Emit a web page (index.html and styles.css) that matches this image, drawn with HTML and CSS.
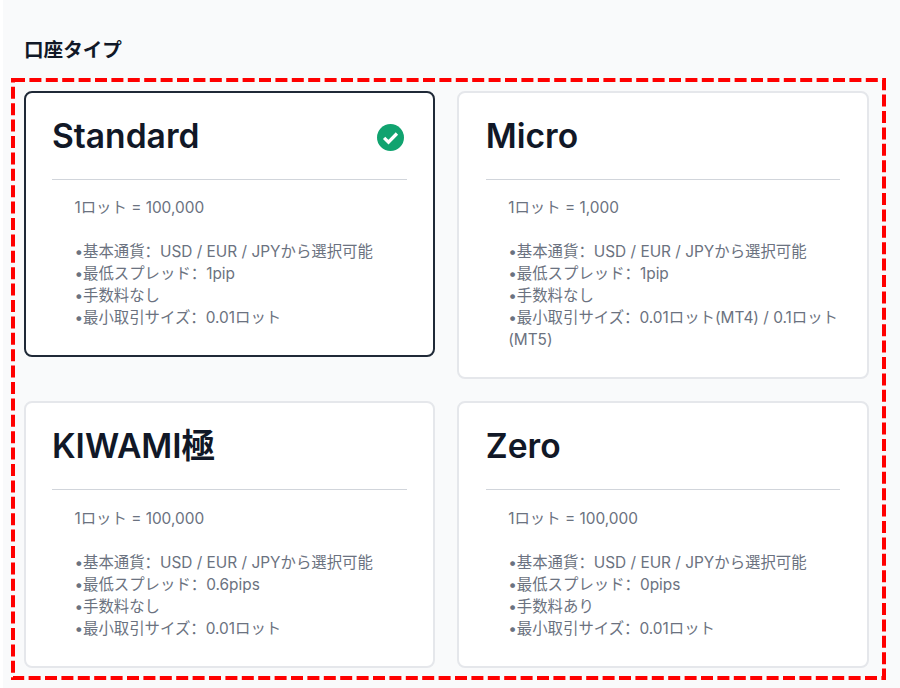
FILE: index.html
```html
<!DOCTYPE html>
<html lang="zh-CN">
<head>
<meta charset="utf-8">
<title>口座タイプ</title>
<link rel="stylesheet" href="styles.css">
</head>
<body>
<main class="page">
  <h2 class="heading">口座タイプ</h2>
  <div class="outline">
    <svg class="dashes" viewBox="0 0 875 602" aria-hidden="true"><rect x="2" y="2" width="871" height="598"/></svg>
    <div class="grid">
      <section class="card card-selected">
        <div class="head">
          <h3 class="title">Standard</h3>
          <svg class="check" viewBox="0 0 512 512" aria-hidden="true"><circle cx="256" cy="256" r="256" fill="#10a36f"/><path d="M135 262l83 83 160-165" fill="none" stroke="#fff" stroke-width="62"/></svg>
        </div>
        <div class="body">
          <p class="lot">1ロット = 100,000</p>
          <p class="specs">•基本通貨：USD / EUR / JPYから選択可能<br>•最低スプレッド：1pip<br>•手数料なし<br>•最小取引サイズ：0.01ロット</p>
        </div>
      </section>
      <section class="card">
        <div class="head"><h3 class="title">Micro</h3></div>
        <div class="body">
          <p class="lot">1ロット = 1,000</p>
          <p class="specs">•基本通貨：USD / EUR / JPYから選択可能<br>•最低スプレッド：1pip<br>•手数料なし<br>•最小取引サイズ：0.01ロット(MT4) / 0.1ロット(MT5)</p>
        </div>
      </section>
      <section class="card">
        <div class="head"><h3 class="title">KIWAMI極</h3></div>
        <div class="body">
          <p class="lot">1ロット = 100,000</p>
          <p class="specs">•基本通貨：USD / EUR / JPYから選択可能<br>•最低スプレッド：0.6pips<br>•手数料なし<br>•最小取引サイズ：0.01ロット</p>
        </div>
      </section>
      <section class="card">
        <div class="head"><h3 class="title">Zero</h3></div>
        <div class="body">
          <p class="lot">1ロット = 100,000</p>
          <p class="specs">•基本通貨：USD / EUR / JPYから選択可能<br>•最低スプレッド：0pips<br>•手数料あり<br>•最小取引サイズ：0.01ロット</p>
        </div>
      </section>
    </div>
  </div>
</main>
</body>
</html>
```
FILE: styles.css
```css
* { box-sizing: border-box; }
html, body { margin: 0; padding: 0; background: #fff; }
body {
  font-family: Inter, "Noto Sans CJK SC", sans-serif;
  height: 688px;
  overflow: hidden;
}
.page {
  margin-left: 3px;
  height: 688px;
  background: #f9fafb;
  padding: 36px 11px 0 8px;
}
.heading {
  margin: 0 0 14px 13px;
  font-size: 19.6px;
  line-height: 28px;
  font-weight: 700;
  color: #111827;
}
.outline {
  position: relative;
  width: 875px;
  height: 602px;
  padding: 13px 17.2px 12px 12.6px;
}
.dashes {
  position: absolute;
  top: 0;
  left: 0;
  width: 875px;
  height: 602px;
  fill: none;
  stroke: #ff0000;
  stroke-width: 4;
  stroke-dasharray: 12 4.4;
  pointer-events: none;
}
.grid {
  display: grid;
  grid-template-columns: 1fr 1fr;
  gap: 22.2px 22.4px;
  align-items: start;
}
.card {
  background: #fff;
  border: 2px solid #e5e7eb;
  border-radius: 8px;
  padding: 20px 26.4px 25.9px;
}
.card-selected { border-color: #1f2937; }
.head {
  display: flex;
  justify-content: space-between;
  align-items: center;
  height: 67px;
  padding-bottom: 21px;
  border-bottom: 1px solid #d1d5db;
}
.title {
  margin: 0;
  font-size: 33.6px;
  line-height: 44px;
  font-weight: 600;
  color: #111827;
}
.check { width: 27px; height: 27px; margin: 3px 2.6px 0 0; }
.body { padding: 17.3px 0 0 22.4px; font-size: 15.4px; line-height: 22px; color: #6b7280; }
.lot { margin: 0 0 22px; }
.specs { margin: 0; }
```
